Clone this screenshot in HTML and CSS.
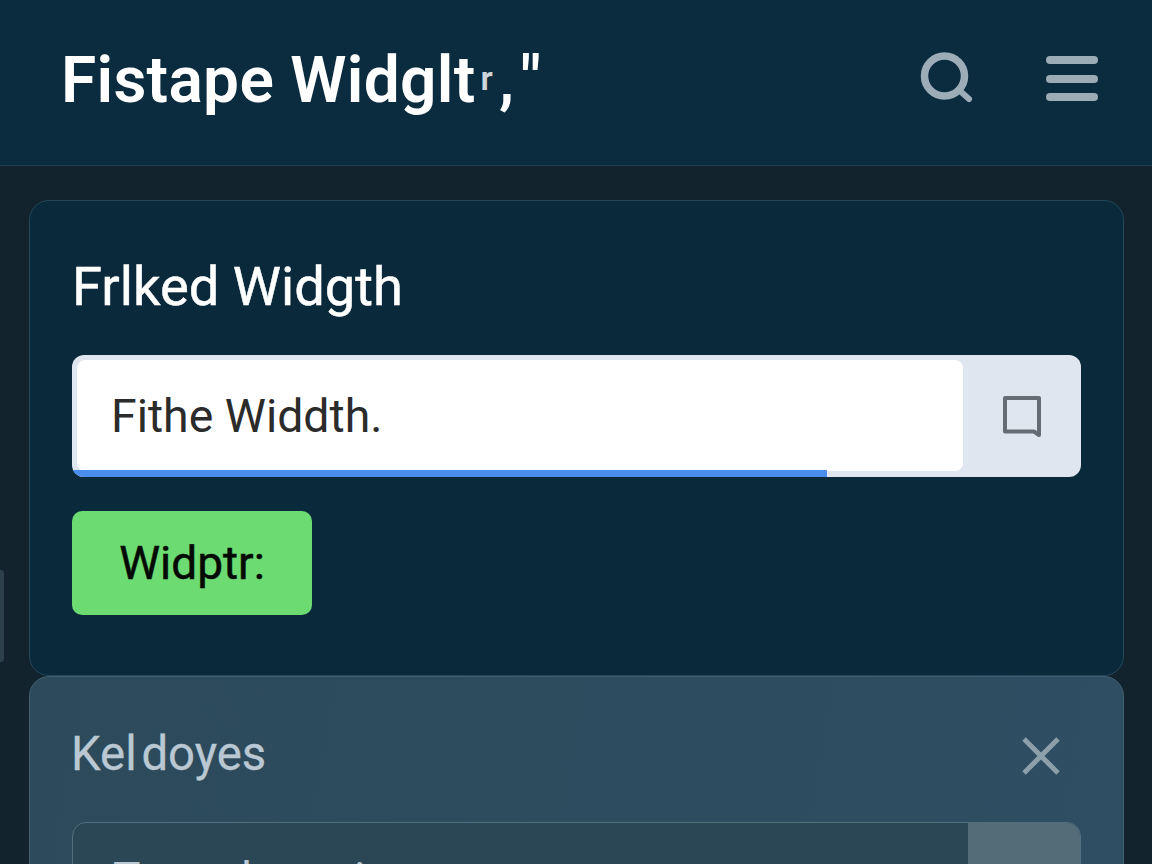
FILE: index.html
```html
<!DOCTYPE html>
<html lang="en">
<head>
    <meta charset="UTF-8">
    <meta name="viewport" content="width=device-width, initial-scale=1.0">
    <title>Fistape Widget</title>
    <link rel="stylesheet" href="styles.css">
</head>
<body>
    <header class="top-bar">
        <h1 class="app-title">Fistape Widglt<span class="title-mark">r</span>,<span class="title-quote">"</span></h1>
        <div class="top-actions">
            <svg viewBox="0 0 54 54" width="54" height="54" aria-hidden="true">
                <circle cx="25.5" cy="24" r="20" fill="none" stroke="#9cadb8" stroke-width="7.5"/>
                <path d="M40 38 L50 47" fill="none" stroke="#9cadb8" stroke-width="6" stroke-linecap="round"/>
            </svg>
            <svg viewBox="0 0 52 46" width="52" height="46" aria-hidden="true">
                <rect x="0" y="0" width="52" height="8" rx="4" fill="#9cadb8"/>
                <rect x="0" y="19" width="52" height="8" rx="4" fill="#9cadb8"/>
                <rect x="0" y="37" width="52" height="8" rx="4" fill="#9cadb8"/>
            </svg>
        </div>
    </header>

    <div class="edge-peek"></div>

    <main class="content">
        <section class="card card-main">
            <h2 class="card-title">Frlked Widgth</h2>
            <div class="field">
                <div class="field-input">Fithe Widdth.</div>
                <div class="field-addon">
                    <svg viewBox="0 0 38 42" width="38" height="42" aria-hidden="true">
                        <path d="M2 2 H36 V39 L31 35.5 H2 Z" fill="none" stroke="#646c74" stroke-width="4" stroke-linejoin="round"/>
                    </svg>
                </div>
                <div class="field-progress"></div>
            </div>
            <button type="button" class="btn-go">Widptr:</button>
        </section>

        <section class="card card-second">
            <div class="card-head">
                <h2 class="card-subtitle">Kel doyes</h2>
                <svg class="icon-close" viewBox="0 0 38 38" width="38" height="38" aria-hidden="true">
                    <path d="M2 2 L36 36 M36 2 L2 36" fill="none" stroke="#8ca0ab" stroke-width="5"/>
                </svg>
            </div>
            <div class="field-dim">
                <div class="field-dim-input">Toner hone i</div>
                <div class="field-dim-addon"></div>
            </div>
        </section>
    </main>
</body>
</html>
```

FILE: styles.css
```css
html, body {
    height: 100%;
    overflow: hidden;
}

body {
    margin: 0;
    background-color: #13232e;
    font-family: Roboto, "Liberation Sans", sans-serif;
}

.top-bar {
    display: flex;
    align-items: center;
    justify-content: space-between;
    box-sizing: border-box;
    height: 166px;
    padding: 0 54px 8px 61px;
    background-color: #0b2b3f;
    border-bottom: 1px solid #1f3f52;
}

.app-title {
    margin: 4px 0 0;
    font-size: 64px;
    font-weight: 600;
    line-height: 1;
    letter-spacing: 0.3px;
    color: #ffffff;
}

.title-mark {
    margin: 0 6px 0 5px;
    font-size: 34px;
    vertical-align: 12px;
    color: #cfd6da;
}

.title-quote {
    margin-left: 6px;
}

.top-actions {
    display: flex;
    align-items: center;
    gap: 73px;
}

.edge-peek {
    position: absolute;
    left: 0;
    top: 570px;
    width: 4px;
    height: 92px;
    background-color: #2a3f4a;
    border-radius: 0 3px 3px 0;
}

.content {
    display: flex;
    flex-direction: column;
    padding: 34px 28px 0 29px;
}

.card {
    box-sizing: border-box;
    border-radius: 20px;
}

.card-main {
    height: 476px;
    padding: 54px 42px 0 42px;
    background-color: #0a2a3c;
    border: 1px solid #24475a;
}

.card-title {
    margin: 0 0 36px;
    font-size: 54.3px;
    font-weight: 400;
    line-height: 64px;
    -webkit-text-stroke: 0.5px #ffffff;
    color: #ffffff;
}

.field {
    position: relative;
    display: flex;
    box-sizing: border-box;
    height: 122px;
    padding: 5px 0 6px 5px;
    background-color: #dfe6ef;
    border-radius: 12px;
    overflow: hidden;
}

.field-input {
    flex: 1;
    display: flex;
    align-items: center;
    padding-left: 34px;
    background-color: #ffffff;
    border-radius: 8px;
    font-size: 46.4px;
    color: #2b2b2b;
}

.field-addon {
    display: flex;
    align-items: center;
    justify-content: center;
    width: 118px;
    margin-top: 3px;
}

.field-progress {
    position: absolute;
    left: 0;
    bottom: 0;
    width: 755px;
    height: 7px;
    background-color: #4a8ded;
}

.btn-go {
    display: block;
    width: 240px;
    height: 104px;
    margin-top: 34px;
    padding: 0;
    background-color: #6bdb72;
    border: none;
    border-radius: 10px;
    font-family: inherit;
    font-size: 46px;
    font-weight: 400;
    -webkit-text-stroke: 0.5px #050a05;
    color: #050a05;
}

.card-second {
    height: 300px;
    padding: 45px 42px 0 42px;
    background: linear-gradient(100deg, #2c4a5a, #2f4e63);
    border: 1px solid #41606f;
}

.card-head {
    display: flex;
    align-items: center;
    justify-content: space-between;
    padding-right: 21px;
    margin-bottom: 36px;
}

.card-subtitle {
    margin: 0 0 0 -1px;
    font-size: 47.3px;
    font-weight: 400;
    line-height: 64px;
    word-spacing: -7px;
    -webkit-text-stroke: 0.3px #b9c8d3;
    color: #b9c8d3;
}

.icon-close {
    margin-top: 3px;
}

.field-dim {
    display: flex;
    height: 122px;
    background-color: #2b4756;
    border: 1px solid #50707f;
    border-radius: 14px;
    overflow: hidden;
}

.field-dim-input {
    flex: 1;
    padding: 29px 0 0 40px;
    font-size: 46px;
    color: #b9c8d3;
}

.field-dim-addon {
    width: 112px;
    background-color: #546b78;
}
```
